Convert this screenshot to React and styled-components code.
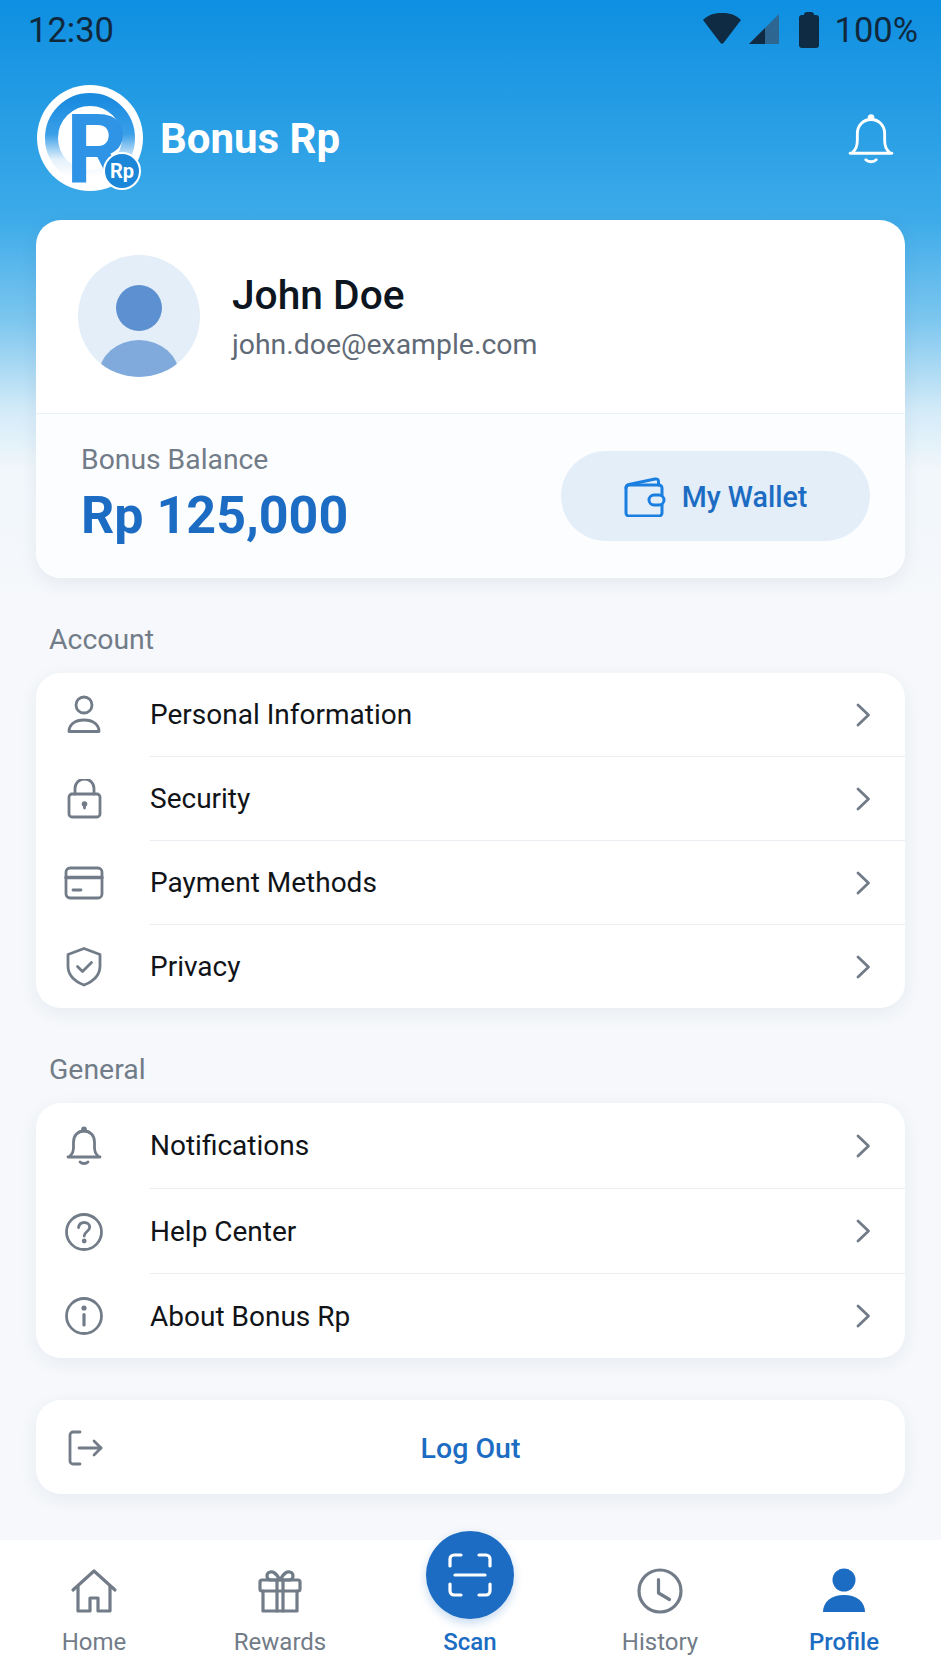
import styled, { createGlobalStyle } from "styled-components";

const GREY = "#727c88";
const BLUE = "#1b6cc2";

const GlobalStyle = createGlobalStyle`
  html, body {
    margin: 0;
    padding: 0;
  }
  body {
    font-family: Roboto, "Liberation Sans", sans-serif;
    background: #f5f7fb;
  }
  * {
    box-sizing: border-box;
  }
`;

const Stroke = ({ size = 40, color = GREY, width = 2.8, children }) => (
  <svg
    width={size}
    height={size}
    viewBox={`0 0 ${size} ${size}`}
    fill="none"
    stroke={color}
    strokeWidth={width}
    strokeLinecap="round"
    strokeLinejoin="round"
  >
    {children}
  </svg>
);

const PersonIcon = () => (
  <Stroke>
    <circle cx="20" cy="10" r="8" />
    <path d="M5 36.5c0-7 6-11.500 15-11.500s15 4.500 15 11.500z" />
  </Stroke>
);

const LockIcon = () => (
  <Stroke>
    <rect x="5" y="15" width="31" height="23" rx="3" />
    <path d="M11 15V9.500a9.500 9.500 0 0 1 19 0V15" />
    <circle cx="20.500" cy="25" r="1.400" fill={GREY} />
    <path d="M20.500 26v3" />
  </Stroke>
);

const CardIcon = () => (
  <Stroke>
    <rect x="2" y="5" width="36" height="30" rx="4" />
    <path d="M2 14.500h36" strokeWidth="3.400" />
    <path d="M9 27h8" />
  </Stroke>
);

const ShieldIcon = () => (
  <Stroke>
    <path d="M20 1.500 36 7.500V19c0 10-7 15.500-16 19C11 34.500 4 29 4 19V7.500z" />
    <path d="M13.500 19.500l5 5 9-9" />
  </Stroke>
);

const BellIcon = ({ size = 40, color = GREY, width = 2.8 }) => (
  <svg width={size} height={size} viewBox="0 0 40 40" fill="none" stroke={color} strokeWidth={width} strokeLinecap="round" strokeLinejoin="round">
    <path d="M6 30c2.500-2 3.500-5 3.500-9v-5C9.500 9.500 14 5 20 5s10.500 4.500 10.500 11v5c0 4 1 7 3.500 9" />
    <path d="M4 31h32" />
    <path d="M16 36c2 2 6 2 8 0" />
    <circle cx="20" cy="3.500" r="1.500" fill={color} />
  </svg>
);

const HelpIcon = () => (
  <Stroke>
    <circle cx="20" cy="20" r="17.500" />
    <path d="M14.500 15.500c.5-3 2.800-5 5.700-5 3.200 0 5.500 2 5.500 4.800 0 4-5.500 4.500-5.500 8.700" />
    <circle cx="20.200" cy="29" r="1" fill={GREY} />
  </Stroke>
);

const InfoIcon = () => (
  <Stroke>
    <circle cx="20" cy="20" r="17.500" />
    <path d="M20 18.500V29" strokeWidth="3.200" />
    <circle cx="20" cy="12" r="1.200" fill={GREY} />
  </Stroke>
);

const LogoutIcon = () => (
  <Stroke>
    <path d="M16 4H9a3 3 0 0 0-3 3v26a3 3 0 0 0 3 3h7" />
    <path d="M15 20h22" />
    <path d="M30 13l7 7-7 7" />
  </Stroke>
);

const Chevron = () => (
  <svg width="22" height="28" viewBox="0 0 22 28" fill="none" stroke={GREY} strokeWidth="2.800" strokeLinecap="round" strokeLinejoin="round">
    <path d="M5 4l10.500 10L5 24" />
  </svg>
);

const HomeIcon = () => (
  <Stroke size={48} width={3.2}>
    <path d="M3 23 24 4l21 19" />
    <path d="M8 19v25h12V31h8v13h12V19" />
  </Stroke>
);

const GiftIcon = () => (
  <Stroke size={48} width={3.2}>
    <rect x="4" y="13" width="40" height="11" rx="2" />
    <path d="M7 24v20h34V24" />
    <path d="M21 13v31M27 13v31" />
    <path d="M24 13c-3-6-7-9-10-8-4 1-4 7 0 8zM24 13c3-6 7-9 10-8 4 1 4 7 0 8z" />
  </Stroke>
);

const ClockIcon = () => (
  <Stroke size={48} width={3.2}>
    <circle cx="24" cy="24" r="21" />
    <path d="M22.500 12.500V26l11 6.500" />
  </Stroke>
);

const ProfileIcon = () => (
  <svg width="48" height="48" viewBox="0 0 48 48" fill={BLUE}>
    <circle cx="24" cy="13" r="11.500" />
    <path d="M3 45c0-10 8-17 21-17s21 7 21 17z" />
  </svg>
);

const ScanIcon = () => (
  <Stroke size={44} color="#fff" width={3.2}>
    <path d="M2 13V6a4 4 0 0 1 4-4h7M31 2h7a4 4 0 0 1 4 4v7M2 31v7a4 4 0 0 0 4 4h7M31 42h7a4 4 0 0 0 4-4v-7" />
    <path d="M7 22h30" />
  </Stroke>
);

const WalletIcon = () => (
  <svg width="42" height="40" viewBox="0 0 42 40" fill="none" stroke="#1a7fe0" strokeWidth="3" strokeLinecap="round" strokeLinejoin="round">
    <path d="M38 18V11a3 3 0 0 0-3-3H5a3 3 0 0 0-3 3v25a3 3 0 0 0 3 3h30a3 3 0 0 0 3-3v-8" />
    <path d="M2 11c0-2 1-3 3-3.500L31 2c2-.4 3.500.5 3.500 2.500V8" />
    <rect x="25" y="18" width="15" height="10" rx="5" fill="#e3eef9" />
  </svg>
);

const Logo = () => (
  <svg width="108" height="108" viewBox="0 0 108 108" overflow="visible">
    <defs>
      <linearGradient id="ring" x1="0" y1="0" x2="0" y2="1">
        <stop offset="0" stopColor="#1b8be0" />
        <stop offset="0.45" stopColor="#3a9fe8" />
        <stop offset="0.78" stopColor="#e4f1fb" />
        <stop offset="1" stopColor="#ffffff" />
      </linearGradient>
    </defs>
    <circle cx="54" cy="53" r="53" fill="#fff" />
    <circle cx="54" cy="53" r="38.500" fill="none" stroke="url(#ring)" strokeWidth="13" />
    <text x="30" y="97" fontFamily="Roboto" fontWeight="700" fontSize="96" fill="#2f94e6">R</text>
    <circle cx="86" cy="86" r="18" fill="#1c86d8" stroke="#fff" strokeWidth="2" />
    <text x="86" y="93" textAnchor="middle" fontFamily="Roboto" fontWeight="700" fontSize="20" fill="#fff">Rp</text>
  </svg>
);

const StatusIcons = () => (
  <svg width="118" height="36" viewBox="0 0 118 36">
    <path d="M0 8C6 2 12 1 19 1s13 1 19 7L20.500 31c-.8 1-2 1-3 0z" fill="#0e2b43" />
    <path d="M46 32 76 2v30z" fill="#2d6690" />
    <path d="M46 32 62 16v16z" fill="#0e2b43" />
    <path d="M101 3h2c0-2 1-3 3-3h4c2 0 3 1 3 3h2c2 0 3 1 3 3v27c0 2-1 3-3 3h-14c-2 0-3-1-3-3V6c0-2 1-3 3-3z" transform="translate(-2 0)" fill="#0e2b43" />
  </svg>
);

const MENU_ACCOUNT = [
  { label: "Personal Information", Icon: PersonIcon, height: 84 },
  { label: "Security", Icon: LockIcon, height: 84 },
  { label: "Payment Methods", Icon: CardIcon, height: 84 },
  { label: "Privacy", Icon: ShieldIcon, height: 83 },
];

const MENU_GENERAL = [
  { label: "Notifications", Icon: BellIcon, height: 86 },
  { label: "Help Center", Icon: HelpIcon, height: 85 },
  { label: "About Bonus Rp", Icon: InfoIcon, height: 84 },
];

const renderRows = (items) =>
  items.map(({ label, Icon, height }, i) => (
    <Row key={label}>
      <RowIcon>
        <Icon />
      </RowIcon>
      <RowBody $height={height} $last={i === items.length - 1}>
        <RowLabel>{label}</RowLabel>
        <Chevron />
      </RowBody>
    </Row>
  ));

const App = () => {
  return (
    <Page>
      <GlobalStyle />
      <StatusBar>
        <StatusText>12:30</StatusText>
        <StatusRight>
          <StatusIcons />
          <StatusText>100%</StatusText>
        </StatusRight>
      </StatusBar>

      <Header>
        <Brand>
          <Logo />
          <BrandName>Bonus Rp</BrandName>
        </Brand>
        <BellIcon size={52} color="#fff" width={2.2} />
      </Header>

      <Content>
        <ProfileCard>
          <ProfileTop>
            <Avatar>
              <AvatarHead />
              <AvatarBody />
            </Avatar>
            <div>
              <UserName>John Doe</UserName>
              <UserEmail>john.doe@example.com</UserEmail>
            </div>
          </ProfileTop>
          <ProfileBottom>
            <div>
              <BalanceLabel>Bonus Balance</BalanceLabel>
              <BalanceValue>Rp 125,000</BalanceValue>
            </div>
            <WalletButton>
              <WalletIcon />
              My Wallet
            </WalletButton>
          </ProfileBottom>
        </ProfileCard>

        <SectionTitle>Account</SectionTitle>
        <ListCard>{renderRows(MENU_ACCOUNT)}</ListCard>

        <SectionTitle>General</SectionTitle>
        <ListCard>{renderRows(MENU_GENERAL)}</ListCard>

        <LogoutCard>
          <LogoutIcon />
          <LogoutLabel>Log Out</LogoutLabel>
        </LogoutCard>
      </Content>

      <BottomNav>
        <NavItem>
          <NavIcon><HomeIcon /></NavIcon>
          <NavLabel>Home</NavLabel>
        </NavItem>
        <NavItem>
          <NavIcon><GiftIcon /></NavIcon>
          <NavLabel>Rewards</NavLabel>
        </NavItem>
        <NavItem>
          <ScanCircle><ScanIcon /></ScanCircle>
          <NavLabel $active $weight={500}>Scan</NavLabel>
        </NavItem>
        <NavItem>
          <NavIcon><ClockIcon /></NavIcon>
          <NavLabel>History</NavLabel>
        </NavItem>
        <NavItem>
          <NavIcon><ProfileIcon /></NavIcon>
          <NavLabel $active $weight={500}>Profile</NavLabel>
        </NavItem>
      </BottomNav>
    </Page>
  );
};

export default App;

const Page = styled.div`
  width: 941px;
  height: 1672px;
  overflow: hidden;
  display: flex;
  flex-direction: column;
  background: linear-gradient(
    180deg,
    #0e8fe1 0,
    #2a9fe5 130px,
    #3dabe9 220px,
    #7cc6ef 320px,
    #d3ebf8 410px,
    #f1f7fb 470px,
    #f6f8fb 600px
  );
`;

const StatusBar = styled.div`
  height: 60px;
  padding: 0 23px 0 28px;
  display: flex;
  align-items: center;
  justify-content: space-between;
`;

const StatusRight = styled.div`
  display: flex;
  align-items: center;
  gap: 14px;
`;

const StatusText = styled.span`
  font-size: 34.500px;
  color: #10283c;
`;

const Header = styled.div`
  height: 160px;
  padding: 26px 44px 28px 36px;
  display: flex;
  align-items: center;
  justify-content: space-between;
`;

const Brand = styled.div`
  display: flex;
  align-items: center;
  gap: 16px;
`;

const BrandName = styled.div`
  font-size: 42px;
  font-weight: 700;
  color: #fff;
  margin-bottom: 2px;
`;

const Content = styled.div`
  padding: 0 36px;
`;

const ProfileCard = styled.div`
  height: 358px;
  border-radius: 25px;
  background: #fff;
  box-shadow: 0 5px 18px rgba(40, 70, 100, 0.08);
  overflow: hidden;
`;

const ProfileTop = styled.div`
  height: 194px;
  padding: 0 0 0 42px;
  display: flex;
  align-items: center;
  gap: 32px;
  border-bottom: 1px solid #edf1f5;
`;

const Avatar = styled.div`
  position: relative;
  width: 122px;
  height: 122px;
  margin-bottom: 2px;
  border-radius: 50%;
  background: #e3eef9;
  overflow: hidden;
  flex-shrink: 0;
`;

const AvatarHead = styled.div`
  position: absolute;
  left: 38px;
  top: 30px;
  width: 46px;
  height: 46px;
  border-radius: 50%;
  background: #5c90d0;
`;

const AvatarBody = styled.div`
  position: absolute;
  left: 21px;
  top: 85px;
  width: 80px;
  height: 70px;
  border-radius: 50%;
  background: #80aadb;
`;

const UserName = styled.div`
  font-size: 40.700px;
  font-weight: 500;
  color: #0d1520;
  line-height: 46px;
`;

const UserEmail = styled.div`
  margin-top: 10px;
  font-size: 28.400px;
  color: #5f6a76;
  line-height: 34px;
`;

const ProfileBottom = styled.div`
  height: 164px;
  padding: 0 35px 0 45px;
  display: flex;
  align-items: center;
  justify-content: space-between;
  background: #fcfdfe;
`;

const BalanceLabel = styled.div`
  font-size: 28.300px;
  color: ${GREY};
  line-height: 34px;
  margin-top: -4px;
`;

const BalanceValue = styled.div`
  margin-top: 10px;
  font-size: 52px;
  font-weight: 700;
  color: ${BLUE};
  line-height: 58px;
`;

const WalletButton = styled.div`
  width: 309px;
  height: 90px;
  border-radius: 45px;
  background: #e3eef9;
  padding-top: 2px;
  display: flex;
  align-items: center;
  justify-content: center;
  gap: 16px;
  font-size: 28.600px;
  font-weight: 500;
  color: ${BLUE};
`;

const SectionTitle = styled.div`
  margin: 46px 0 17px 13px;
  font-size: 28.400px;
  line-height: 32px;
  color: ${GREY};
`;

const ListCard = styled.div`
  border-radius: 25px;
  background: #fff;
  box-shadow: 0 5px 18px rgba(40, 70, 100, 0.07);
  overflow: hidden;
`;

const Row = styled.div`
  display: flex;
  align-items: center;
`;

const RowIcon = styled.div`
  width: 114px;
  padding-left: 28px;
  display: flex;
  align-items: center;
`;

const RowBody = styled.div`
  flex: 1;
  height: ${(p) => p.$height}px;
  padding-right: 30px;
  display: flex;
  align-items: center;
  justify-content: space-between;
  border-bottom: ${(p) => (p.$last ? "none" : "1px solid #e9edf1")};
`;

const RowLabel = styled.div`
  font-size: 28px;
  color: #101418;
`;

const LogoutCard = styled.div`
  margin-top: 42px;
  height: 94px;
  padding: 2px 28px 0;
  border-radius: 25px;
  background: #fff;
  box-shadow: 0 5px 18px rgba(40, 70, 100, 0.07);
  display: grid;
  grid-template-columns: 1fr auto 1fr;
  align-items: center;
`;

const LogoutLabel = styled.div`
  font-size: 28.500px;
  font-weight: 500;
  color: ${BLUE};
`;

const BottomNav = styled.div`
  margin-top: auto;
  height: 132px;
  padding-top: 27px;
  background: #fff;
  display: grid;
  grid-template-columns: 188px 184px 196px 184px 184px;
`;

const NavItem = styled.div`
  display: flex;
  flex-direction: column;
  align-items: center;
`;

const NavIcon = styled.div`
  width: 48px;
  height: 48px;
`;

const ScanCircle = styled.div`
  width: 88px;
  height: 88px;
  margin-top: -36px;
  margin-bottom: -4px;
  border-radius: 50%;
  background: ${BLUE};
  box-shadow: 0 4px 10px rgba(27, 108, 194, 0.25);
  display: flex;
  align-items: center;
  justify-content: center;
`;

const NavLabel = styled.div`
  margin-top: 11px;
  font-size: 24px;
  line-height: 32px;
  font-weight: ${(p) => p.$weight || 400};
  color: ${(p) => (p.$active ? BLUE : GREY)};
`;
